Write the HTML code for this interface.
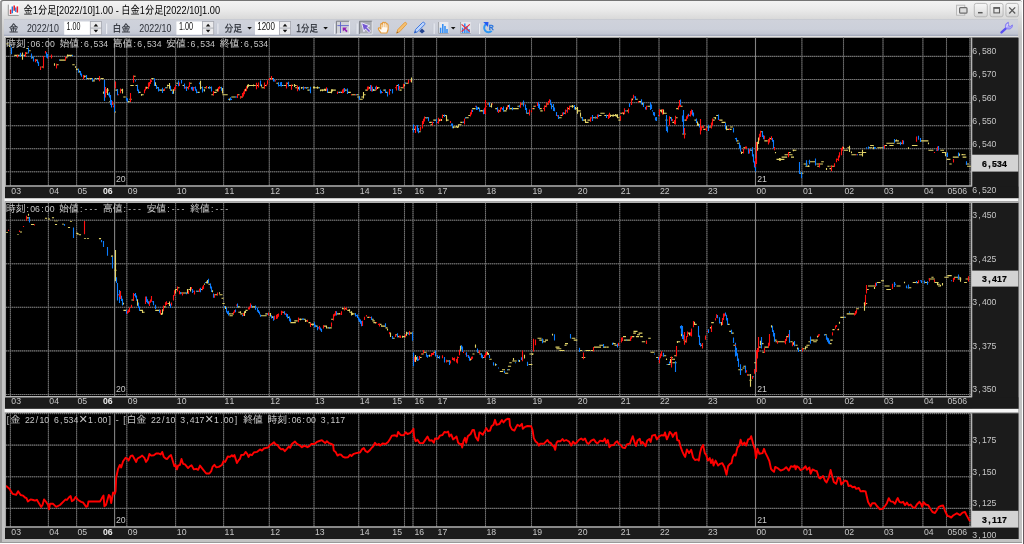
<!DOCTYPE html>
<html lang="ja"><head><meta charset="utf-8"><title>金1分足[2022/10]1.00 - 白金1分足[2022/10]1.00</title>
<style>
html,body{margin:0;padding:0;background:#fff;}
body{width:1024px;height:544px;overflow:hidden;position:relative;font-family:"Liberation Sans","IPAPGothic","Noto Sans CJK JP",sans-serif;}
#win{position:absolute;left:0;top:0;width:1021.8px;height:542.5px;background:#9a9a9a;border-top:1.2px solid #747474;box-sizing:border-box;border-radius:3px 3px 0 0;}
#frame{position:absolute;left:1.8px;top:1.2px;width:1020px;height:541.3px;background:linear-gradient(#ececec 0,#dadada 18px,#c5c5c5 36px,#c2c2c2 100%);border-radius:2px 2px 0 0;}
#redge{position:absolute;left:1022.9px;top:0;width:1.1px;height:544px;background:#64595e;}
#title{position:absolute;left:1.8px;top:1.2px;width:1020px;height:18.1px;background:linear-gradient(#f3f3f3,#ebebeb 45%,#d9d9d9);border-radius:2px 2px 0 0;}
#tool{position:absolute;left:4.3px;top:19.3px;width:1014.2px;height:17px;background:linear-gradient(#c2c4ca,#cfd2db 6%,#ccd0da 60%,#c2c6d2 88%,#a8aebf 97%);}
svg{position:absolute;left:0;top:0;will-change:transform;}
.t{fill:#c6c6c6;}
.k{font-family:"Liberation Sans","IPAGothic",monospace;font-size:10.2px;}
.l{font-family:"Liberation Sans","IPAGothic",sans-serif;font-size:9.9px;}
.kx{font-family:"Liberation Sans","IPAGothic",sans-serif;font-size:14.5px;}
.b6{font-weight:bold;fill:#ececec;}
.bx{font-weight:bold;fill:#000;stroke:#000;stroke-width:.25px;}
.bx.l{font-size:9.9px;}
.ui{font-family:"Liberation Sans","IPAPGothic","Noto Sans CJK JP",sans-serif;}
</style></head><body>
<div id="win"></div><div id="frame"></div><div id="redge"></div><div id="title"></div><div id="tool"></div>
<svg width="1024" height="544" viewBox="0 0 1024 544">
<rect x="4.4" y="36.3" width="1014" height="1.5" fill="#ededed"/>
<rect x="5" y="37.7" width="1013.3" height="501.3" fill="#000"/>
<rect x="972.1" y="37.7" width="46.2" height="160.5" fill="#1b1b1b"/>
<rect x="5" y="186.6" width="1013.3" height="11.6" fill="#1b1b1b"/>
<rect x="972.1" y="202.9" width="46.2" height="205.9" fill="#1b1b1b"/>
<rect x="5" y="397.3" width="1013.3" height="11.5" fill="#1b1b1b"/>
<rect x="972.1" y="413.2" width="46.2" height="125.8" fill="#1b1b1b"/>
<rect x="5" y="527.6" width="1013.3" height="11.4" fill="#1b1b1b"/>
<rect x="4.5" y="198.2" width="1014" height="3.3" fill="#f6f6f6"/><rect x="4.5" y="201.4" width="1014" height="1.5" fill="#c4c4c4"/>
<rect x="4.5" y="408.8" width="1014" height="3.4" fill="#f6f6f6"/><rect x="4.5" y="412.1" width="1014" height="1.2" fill="#c4c4c4"/>
<path d="M10.4 37.7V186.0M48.4 37.7V186.0M76.6 37.7V186.0M126.8 37.7V186.0M175.6 37.7V186.0M223.6 37.7V186.0M269.3 37.7V186.0M314.0 37.7V186.0M358.7 37.7V186.0M404.5 37.7V186.0M413.0 37.7V186.0M436.6 37.7V186.0M485.5 37.7V186.0M531.5 37.7V186.0M576.7 37.7V186.0M619.7 37.7V186.0M659.0 37.7V186.0M706.9 37.7V186.0M801.9 37.7V186.0M843.5 37.7V186.0M883.0 37.7V186.0M922.9 37.7V186.0M946.5 37.7V186.0M969.8 37.7V186.0M6.0 56.4H971.5M6.0 79.5H971.5M6.0 102.6H971.5M6.0 125.7H971.5M6.0 148.7H971.5M6.0 171.8H971.5" stroke="#424242" stroke-width="1.1" fill="none"/>
<path d="M10.4 37.7V186.0M48.4 37.7V186.0M76.6 37.7V186.0M126.8 37.7V186.0M175.6 37.7V186.0M223.6 37.7V186.0M269.3 37.7V186.0M314.0 37.7V186.0M358.7 37.7V186.0M404.5 37.7V186.0M413.0 37.7V186.0M436.6 37.7V186.0M485.5 37.7V186.0M531.5 37.7V186.0M576.7 37.7V186.0M619.7 37.7V186.0M659.0 37.7V186.0M706.9 37.7V186.0M801.9 37.7V186.0M843.5 37.7V186.0M883.0 37.7V186.0M922.9 37.7V186.0M946.5 37.7V186.0M969.8 37.7V186.0M6.0 56.4H971.5M6.0 79.5H971.5M6.0 102.6H971.5M6.0 125.7H971.5M6.0 148.7H971.5M6.0 171.8H971.5" stroke="#767676" stroke-width="1" stroke-dasharray="1 1" fill="none"/>
<path d="M114.6 37.7V186.0M755.5 37.7V186.0" stroke="#828282" stroke-width="1.1" fill="none"/>
<path d="M10.4 202.9V396.7M48.4 202.9V396.7M76.6 202.9V396.7M126.8 202.9V396.7M175.6 202.9V396.7M223.6 202.9V396.7M269.3 202.9V396.7M314.0 202.9V396.7M358.7 202.9V396.7M404.5 202.9V396.7M413.0 202.9V396.7M436.6 202.9V396.7M485.5 202.9V396.7M531.5 202.9V396.7M576.7 202.9V396.7M619.7 202.9V396.7M659.0 202.9V396.7M706.9 202.9V396.7M801.9 202.9V396.7M843.5 202.9V396.7M883.0 202.9V396.7M922.9 202.9V396.7M946.5 202.9V396.7M969.8 202.9V396.7M6.0 220.2H971.5M6.0 263.8H971.5M6.0 307.3H971.5M6.0 350.9H971.5M6.0 394.5H971.5" stroke="#424242" stroke-width="1.1" fill="none"/>
<path d="M10.4 202.9V396.7M48.4 202.9V396.7M76.6 202.9V396.7M126.8 202.9V396.7M175.6 202.9V396.7M223.6 202.9V396.7M269.3 202.9V396.7M314.0 202.9V396.7M358.7 202.9V396.7M404.5 202.9V396.7M413.0 202.9V396.7M436.6 202.9V396.7M485.5 202.9V396.7M531.5 202.9V396.7M576.7 202.9V396.7M619.7 202.9V396.7M659.0 202.9V396.7M706.9 202.9V396.7M801.9 202.9V396.7M843.5 202.9V396.7M883.0 202.9V396.7M922.9 202.9V396.7M946.5 202.9V396.7M969.8 202.9V396.7M6.0 220.2H971.5M6.0 263.8H971.5M6.0 307.3H971.5M6.0 350.9H971.5M6.0 394.5H971.5" stroke="#767676" stroke-width="1" stroke-dasharray="1 1" fill="none"/>
<path d="M114.6 202.9V396.7M755.5 202.9V396.7" stroke="#828282" stroke-width="1.1" fill="none"/>
<path d="M10.4 413.2V527.0M48.4 413.2V527.0M76.6 413.2V527.0M126.8 413.2V527.0M175.6 413.2V527.0M223.6 413.2V527.0M269.3 413.2V527.0M314.0 413.2V527.0M358.7 413.2V527.0M404.5 413.2V527.0M413.0 413.2V527.0M436.6 413.2V527.0M485.5 413.2V527.0M531.5 413.2V527.0M576.7 413.2V527.0M619.7 413.2V527.0M659.0 413.2V527.0M706.9 413.2V527.0M801.9 413.2V527.0M843.5 413.2V527.0M883.0 413.2V527.0M922.9 413.2V527.0M946.5 413.2V527.0M969.8 413.2V527.0M6.0 445.1H971.5M6.0 476.8H971.5M6.0 508.4H971.5" stroke="#424242" stroke-width="1.1" fill="none"/>
<path d="M10.4 413.2V527.0M48.4 413.2V527.0M76.6 413.2V527.0M126.8 413.2V527.0M175.6 413.2V527.0M223.6 413.2V527.0M269.3 413.2V527.0M314.0 413.2V527.0M358.7 413.2V527.0M404.5 413.2V527.0M413.0 413.2V527.0M436.6 413.2V527.0M485.5 413.2V527.0M531.5 413.2V527.0M576.7 413.2V527.0M619.7 413.2V527.0M659.0 413.2V527.0M706.9 413.2V527.0M801.9 413.2V527.0M843.5 413.2V527.0M883.0 413.2V527.0M922.9 413.2V527.0M946.5 413.2V527.0M969.8 413.2V527.0M6.0 445.1H971.5M6.0 476.8H971.5M6.0 508.4H971.5" stroke="#767676" stroke-width="1" stroke-dasharray="1 1" fill="none"/>
<path d="M6.0 413.7H971.5" stroke="#8a8a8a" stroke-width="1" stroke-dasharray="1 1"/>
<path d="M114.6 413.2V527.0M755.5 413.2V527.0" stroke="#828282" stroke-width="1.1" fill="none"/>
<path d="M6.4 43.9H8.6M9.5 45.5V47.0M14.3 55.4H16.7M15.5 55.4H17.5M17.3 55.4H19.7M20.4 55.4H22.6M22.5 52.6V59.7M23.3 55.4H25.7M25.5 53.1H27.5M26.4 48.5H28.6M28.3 50.8H30.7M31.3 57.8H33.7M35.4 60.1H37.6M41.5 67.0H43.5M54.5 63.2V65.8M56.4 64.7H58.6M59.4 60.1H61.6M60.3 60.1H62.7M61.2 60.1H63.8M63.3 60.1H65.7M65.5 57.8H67.5M67.5 54.5V56.8M67.2 55.4H69.8M68.4 55.4H70.6M70.3 55.4H72.7M72.3 64.7H74.7M75.5 66.2V67.8M76.5 68.5V69.9M76.3 69.3H78.7M79.5 70.7V72.5M84.5 75.6V77.5M84.4 76.2H86.6M86.2 78.5H88.8M89.3 78.5H91.7M90.2 78.5H92.8M92.2 80.9H94.8M94.5 78.5H96.5M96.2 78.5H98.8M97.4 78.5H99.6M100.5 78.5H102.5M101.3 78.5H103.7M103.5 91.6V93.8M103.5 92.4H105.5M104.4 92.4H106.6M106.3 90.1H108.7M109.4 101.6H111.6M111.5 100.9V104.5M111.4 104.0H113.6M115.4 90.1H117.6M120.4 90.1H122.6M122.5 88.7V93.5M123.3 97.0H125.7M127.3 101.6H129.7M129.3 99.3H131.7M130.3 85.5H132.7M131.3 85.5H133.7M133.4 76.2H135.6M135.5 85.5H137.5M138.4 92.4H140.6M141.5 94.0V95.8M141.3 94.7H143.7M146.5 86.7V88.7M146.3 87.8H148.7M151.3 78.5H153.7M155.5 82.2V85.9M156.4 87.8H158.6M159.4 90.1H161.6M160.3 90.1H162.7M162.3 90.1H164.7M165.3 87.8H167.7M167.5 84.7V86.6M167.4 85.5H169.6M169.5 82.9V88.7M170.5 90.1H172.5M173.5 89.2V93.8M176.3 83.2H178.7M182.5 85.5H184.5M186.2 87.8H188.8M189.3 83.2H191.7M197.4 92.4H199.6M200.5 80.8V89.2M200.3 87.8H202.7M204.5 89.2V91.4M204.2 87.8H206.8M208.5 87.0V88.5M209.3 87.8H211.7M211.4 94.7H213.6M213.4 92.4H215.6M214.4 92.4H216.6M215.4 90.1H217.6M217.5 88.8V91.4M219.3 87.8H221.7M222.5 88.0V93.4M222.4 94.7H224.6M223.3 94.7H225.7M224.3 94.7H226.7M225.3 94.7H227.7M229.5 98.6V100.5M231.3 97.0H233.7M232.3 97.0H234.7M233.5 97.0H235.5M237.5 94.7H239.5M240.3 97.0H242.7M245.5 88.7V91.3M247.5 84.8V88.4M248.5 84.2V86.8M248.4 85.5H250.6M249.3 85.5H251.7M250.4 85.5H252.6M251.3 85.5H253.7M253.5 84.4V86.3M253.2 85.5H255.8M256.4 85.5H258.6M261.5 84.4V86.7M261.5 87.8H263.5M262.5 87.8H264.5M264.4 85.5H266.6M269.2 78.5H271.8M271.4 78.5H273.6M276.4 83.2H278.6M281.2 85.5H283.8M283.5 85.5H285.5M284.3 85.5H286.7M286.4 83.2H288.6M288.5 85.5H290.5M289.3 85.5H291.7M292.5 84.8V86.1M294.5 84.0V86.9M294.4 85.5H296.6M295.3 87.8H297.7M298.5 86.9V89.2M301.5 86.9V88.7M301.3 87.8H303.7M304.3 87.8H306.7M306.4 87.8H308.6M307.4 90.1H309.6M313.5 86.4V88.5M314.5 86.5V88.4M315.2 87.8H317.8M317.5 86.4V88.7M317.3 87.8H319.7M320.5 89.4V91.2M320.4 90.1H322.6M322.5 89.2V91.3M323.5 89.5V90.8M324.5 88.8V90.7M325.5 88.8V90.9M327.4 92.4H329.6M328.4 92.4H330.6M329.5 92.4H331.5M331.5 89.3V93.3M332.5 89.3V91.5M332.2 90.1H334.8M333.2 90.1H335.8M338.3 92.4H340.7M340.2 92.4H342.8M344.3 90.1H346.7M347.3 92.4H349.7M348.2 92.4H350.8M351.4 94.7H353.6M353.3 94.7H355.7M356.4 94.7H358.6M357.2 97.0H359.8M359.5 99.3H361.5M360.3 99.3H362.7M361.3 97.0H363.7M363.5 92.0V98.5M363.4 94.7H365.6M365.3 90.1H367.7M369.5 86.9V88.8M373.5 89.0V91.0M373.3 90.1H375.7M377.5 87.1V89.1M377.5 87.8H379.5M383.4 90.1H385.6M385.4 92.4H387.6M396.3 85.5H398.7M399.4 90.1H401.6M400.5 87.8H402.5M401.2 87.8H403.8M404.5 84.3V86.2M405.5 83.2H407.5M406.5 83.2H408.5M411.5 77.5V82.5M412.3 129.4H414.7M413.5 129.4H415.5M418.3 131.7H420.7M424.4 117.8H426.6M426.4 117.8H428.6M429.2 122.4H431.8M430.5 124.7H432.5M433.3 120.1H435.7M434.4 120.1H436.6M439.5 119.3V121.2M441.5 118.9V120.9M442.4 115.5H444.6M444.3 115.5H446.7M446.5 115.5V121.3M446.4 120.1H448.6M453.5 126.2V128.2M453.2 127.0H455.8M454.2 127.0H456.8M456.5 125.8V127.6M457.5 126.2V128.0M458.5 124.3V127.6M458.3 124.7H460.7M459.5 124.7H461.5M460.3 122.4H462.7M465.2 117.8H467.8M466.3 117.8H468.7M468.3 115.5H470.7M472.2 108.6H474.8M473.5 108.6H475.5M478.5 107.2V109.1M479.5 110.9H481.5M481.5 110.0V111.5M481.4 110.9H483.6M487.3 104.0H489.7M489.4 106.3H491.6M491.5 103.3V107.6M495.3 108.6H497.7M498.4 110.9H500.6M503.4 110.9H505.6M504.4 110.9H506.6M506.5 107.2V110.0M508.5 105.0V107.0M509.3 108.6H511.7M510.5 108.6H512.5M512.2 108.6H514.8M513.2 108.6H515.8M514.5 108.6H516.5M515.4 108.6H517.6M516.3 108.6H518.7M517.4 106.3H519.6M520.2 104.0H522.8M521.4 104.0H523.6M526.3 113.2H528.7M532.5 108.6H534.5M533.4 106.3H535.6M539.3 108.6H541.7M540.3 110.9H542.7M544.4 106.3H546.6M546.4 104.0H548.6M551.2 106.3H553.8M558.3 117.8H560.7M559.4 117.8H561.6M560.4 115.5H562.6M563.3 113.2H565.7M567.2 108.6H569.8M569.5 106.3H571.5M570.5 106.3H572.5M572.5 105.1V107.7M572.2 106.3H574.8M575.5 107.1V109.7M575.3 108.6H577.7M577.5 107.0V113.8M577.5 110.9H579.5M578.3 110.9H580.7M580.5 112.5V116.7M580.5 117.8H582.5M582.3 120.1H584.7M583.4 120.1H585.6M585.5 118.9V123.1M585.2 122.4H587.8M586.4 122.4H588.6M587.5 120.1H589.5M588.2 120.1H590.8M592.4 117.8H594.6M593.4 117.8H595.6M595.2 117.8H597.8M598.3 115.5H600.7M599.5 115.5H601.5M600.3 113.2H602.7M601.2 113.2H603.8M602.3 113.2H604.7M604.3 115.5H606.7M606.3 115.5H608.7M610.5 114.6V116.9M610.5 115.5H612.5M612.5 114.8V116.4M613.5 114.4V116.4M613.3 115.5H615.7M615.5 114.1V116.2M616.5 114.5V116.7M617.5 114.3V118.2M617.4 117.8H619.6M618.4 120.1H620.6M620.3 113.2H622.7M623.5 112.5V114.5M626.4 110.9H628.6M632.5 98.4V100.3M635.3 99.3H637.7M638.4 101.6H640.6M639.3 101.6H641.7M642.5 103.1V104.7M647.4 106.3H649.6M648.4 106.3H650.6M660.5 109.7V111.6M661.5 109.4V112.4M663.5 109.4V114.2M663.3 113.2H665.7M664.3 113.2H666.7M665.5 120.1H667.5M670.5 116.9V118.6M672.4 122.4H674.6M675.4 117.8H677.6M676.2 108.6H678.8M680.4 106.3H682.6M682.3 134.0H684.7M683.3 134.0H685.7M684.4 120.1H686.6M694.5 120.1H696.5M697.5 121.6V125.7M698.5 123.5V125.9M701.4 127.0H703.6M703.3 129.4H705.7M706.2 127.0H708.8M708.3 127.0H710.7M709.2 127.0H711.8M712.3 120.1H714.7M713.5 117.8H715.5M715.5 116.9V119.2M716.2 115.5H718.8M719.4 120.1H721.6M720.5 120.1H722.5M721.5 122.4H723.5M722.4 122.4H724.6M723.5 122.4H725.5M726.5 125.9V130.3M727.5 128.8V130.0M727.5 129.4H729.5M729.4 129.4H731.6M730.2 127.0H732.8M736.5 140.9H738.5M737.2 143.2H739.8M741.5 151.4V153.9M741.5 152.5H743.5M743.3 147.8H745.7M750.5 150.2H752.5M757.5 141.7V150.8M758.5 137.5V143.9M760.4 131.7H762.6M764.3 140.9H766.7M765.3 140.9H767.7M769.4 138.6H771.6M775.5 151.9V153.3M776.5 159.4H780.5M779.5 158.0V160.7M780.5 158.3V160.8M780.2 159.4H782.8M780.6 159.4H784.4M781.6 157.1H785.4M782.9 157.1H786.1M783.9 157.1H787.1M784.5 154.8H788.5M788.3 152.5H790.7M788.5 154.8H792.5M791.0 157.1H794.0M793.5 149.4V151.2M792.6 150.2H796.4M799.6 173.2H803.4M803.6 164.0H807.4M805.4 166.3H809.6M808.5 165.3V167.0M808.7 161.7H812.3M811.2 161.7H813.8M811.3 161.7H815.7M816.3 164.0H818.7M817.2 166.3H819.8M818.4 164.0H822.6M820.1 164.0H822.9M821.2 161.7H823.8M826.5 167.9V170.0M827.4 166.3H829.6M829.5 168.6H831.5M830.4 166.3H834.6M843.5 147.1V149.1M844.0 150.2H847.0M845.0 150.2H848.0M847.4 147.8H849.6M849.5 145.8V152.1M851.5 151.5V153.2M851.4 154.8H855.6M853.1 154.8H855.9M858.2 152.5H860.8M859.0 154.8H862.0M862.5 149.7V156.5M861.3 152.5H865.7M862.8 152.5H866.2M868.6 147.8H872.4M870.1 145.5H872.9M871.2 145.5H873.8M873.5 146.7V149.3M877.3 147.8H879.7M877.5 147.8H881.5M878.4 147.8H882.6M880.7 147.8H884.3M884.0 145.5H887.0M886.3 143.2H888.7M887.2 143.2H889.8M888.1 143.2H890.9M889.4 145.5H893.6M890.6 143.2H894.4M894.1 140.9H896.9M896.5 139.5V141.6M896.1 140.9H898.9M896.7 143.2H900.3M900.4 143.2H902.6M908.5 147.2V149.1M911.9 145.5H915.1M913.5 145.5H917.5M920.8 140.9H924.2M921.8 140.9H925.2M923.7 140.9H927.3M924.6 140.9H928.4M928.5 142.5V144.2M928.4 150.2H932.6M929.6 150.2H933.4M940.3 150.2H942.7M941.0 150.2H944.0M941.9 152.5H945.1M945.5 151.9V156.2M946.6 159.4H950.4M949.3 164.0H951.7M952.8 157.1H956.2M953.7 157.1H957.3M954.3 157.1H958.7M959.5 153.4V155.7M962.5 154.0V155.3M961.4 154.8H965.6M962.6 157.1H966.4M965.9 164.0H969.1M967.1 166.3H969.9M968.0 166.3H971.0M107.5 88.1V95.0M115.5 111.5V112.5" stroke="#e2d468" stroke-width="1.1" fill="none"/>
<path d="M10.5 45.7V46.8M11.5 47.6V54.2M19.5 54.9V56.0M20.5 52.8V56.8M23.5 54.9V56.0M28.5 47.8V53.6M31.5 53.6V58.8M33.5 56.4V61.4M37.5 59.7V63.3M38.5 61.7V65.9M46.5 52.2V57.5M47.5 54.1V58.5M59.5 59.5V60.6M72.5 54.9V56.0M78.5 68.8V72.7M80.5 71.1V75.2M81.5 73.5V76.7M86.5 75.1V79.0M92.5 78.1V81.5M96.5 78.0V79.1M108.5 93.6V95.5M109.5 92.3V97.5M114.5 104.5V112.1M117.5 89.1V95.3M126.5 97.6V100.8M127.5 98.3V102.2M135.5 80.3V81.4M137.5 84.7V90.9M138.5 89.5V93.2M154.5 78.3V85.9M156.5 84.9V88.9M158.5 87.0V91.6M159.5 89.5V90.6M162.5 87.7V93.0M165.5 87.2V88.3M170.5 85.8V90.7M172.5 91.2V94.0M176.5 84.9V86.0M178.5 80.4V86.2M181.5 80.0V83.6M184.5 83.5V88.7M186.5 86.5V91.1M191.5 87.1V89.4M192.5 86.7V90.8M194.5 87.2V88.3M195.5 86.6V90.8M196.5 89.3V93.2M197.5 91.9V93.0M199.5 82.6V84.3M202.5 86.6V92.4M203.5 89.5V90.6M209.5 86.2V88.7M211.5 86.6V91.4M221.5 86.7V90.8M228.5 98.8V99.9M230.5 97.3V100.3M231.5 98.8V99.9M235.5 96.5V97.6M236.5 96.5V97.6M260.5 80.6V85.9M273.5 77.9V81.4M274.5 80.3V81.4M278.5 82.3V86.4M279.5 84.9V86.0M280.5 82.3V86.2M281.5 82.1V86.5M283.5 84.9V86.0M288.5 81.7V86.4M299.5 86.6V90.4M303.5 86.6V89.8M306.5 86.9V88.8M309.5 89.5V90.6M310.5 86.7V93.2M319.5 87.2V88.3M327.5 88.6V92.8M338.5 91.9V93.0M340.5 91.9V93.0M344.5 88.0V92.0M347.5 88.5V94.0M356.5 94.2V95.3M359.5 96.3V99.7M370.5 85.1V91.1M372.5 86.8V91.5M375.5 86.7V89.4M380.5 89.4V93.5M381.5 91.0V93.3M385.5 89.6V93.1M387.5 92.0V96.5M390.5 89.2V90.9M392.5 89.0V93.4M398.5 83.9V90.6M405.5 82.6V83.7M415.5 127.1V130.1M417.5 126.2V130.8M418.5 128.0V133.2M426.5 117.3V118.4M428.5 117.2V121.2M433.5 121.9V123.0M436.5 119.1V123.3M444.5 114.5V117.0M451.5 123.5V125.7M452.5 123.5V128.2M463.5 121.6V123.0M465.5 117.3V118.4M472.5 109.7V112.0M476.5 105.7V109.9M477.5 107.3V109.7M479.5 107.7V111.6M483.5 109.6V114.2M489.5 102.6V106.8M497.5 107.3V111.8M502.5 108.0V109.7M503.5 106.5V111.4M509.5 104.4V109.2M512.5 107.3V110.3M519.5 105.3V107.3M523.5 100.6V106.4M525.5 104.4V110.0M526.5 107.9V113.2M528.5 112.6V113.7M538.5 101.8V107.9M539.5 104.0V109.2M550.5 99.7V104.9M551.5 103.4V109.3M553.5 103.9V110.9M554.5 107.4V111.3M556.5 112.1V115.9M558.5 115.0V119.1M563.5 112.3V114.6M566.5 110.3V111.4M574.5 105.1V109.4M582.5 117.0V120.8M592.5 115.0V121.0M595.5 116.6V118.6M598.5 114.5V117.0M606.5 114.8V118.1M625.5 110.3V111.4M629.5 103.2V107.0M634.5 96.5V97.6M635.5 96.2V100.1M641.5 99.2V104.5M643.5 102.6V107.1M645.5 106.9V109.5M650.5 102.3V110.1M651.5 104.5V109.1M652.5 110.3V111.4M653.5 111.9V115.2M654.5 112.2V116.3M655.5 117.2V120.6M656.5 117.0V121.0M658.5 115.0V116.0M667.5 126.4V132.4M671.5 117.2V121.0M682.5 115.4V121.7M688.5 113.8V116.4M692.5 110.1V115.4M693.5 112.4V116.6M696.5 118.4V123.1M699.5 123.9V127.5M700.5 125.8V130.7M708.5 124.8V131.0M718.5 114.6V119.9M725.5 122.9V129.2M733.5 127.7V132.6M735.5 138.0V139.2M736.5 137.7V141.5M739.5 142.8V148.8M740.5 145.3V151.7M748.5 148.8V153.8M750.5 149.1V151.1M752.5 147.2V156.4M753.5 154.2V162.6M754.5 161.2V167.4M762.5 131.0V136.9M763.5 135.3V139.2M772.5 138.1V141.8M773.5 139.9V148.4M806.5 160.2V166.3M809.5 159.7V164.2M815.5 158.6V165.4M857.5 154.2V155.3M866.5 147.3V148.4M868.5 146.6V149.1M874.5 147.1V148.9M875.5 147.3V148.4M883.5 146.6V148.6M894.5 138.9V142.7M900.5 141.8V145.3M903.5 140.4V144.3M918.5 135.7V139.7M920.5 137.9V142.0M936.5 149.6V150.7M938.5 146.1V150.5M946.5 154.2V155.3M947.5 152.4V157.1M958.5 152.6V156.5M966.5 161.2V164.7M413.5 124.5V132.5M417.5 125.0V131.5M104.5 80.0V101.0M110.5 95.0V105.0M111.5 100.0V107.5M114.5 105.0V108.1M666.5 115.0V131.0M680.5 99.5V105.0M683.5 110.0V134.0M755.5 160.0V171.5M799.5 162.0V174.0M801.5 172.0V178.0" stroke="#0a7cff" stroke-width="1.1" fill="none"/>
<path d="M17.5 54.8V57.5M25.5 52.1V57.1M35.5 58.9V62.2M40.5 66.5V69.9M43.5 59.5V68.3M48.5 57.2V58.3M51.5 54.4V58.6M56.5 63.8V68.5M65.5 56.4V60.5M83.5 75.1V79.3M99.5 75.9V81.3M106.5 89.3V92.9M113.5 105.5V107.3M118.5 94.2V95.3M120.5 88.5V93.2M133.5 75.4V82.7M144.5 89.4V93.3M145.5 86.8V90.6M148.5 82.4V89.1M149.5 82.0V86.6M150.5 79.0V84.0M151.5 80.2V82.1M164.5 88.6V90.9M174.5 87.2V90.7M175.5 84.9V88.9M179.5 82.4V86.1M185.5 86.7V88.4M188.5 86.3V89.5M189.5 82.2V87.0M193.5 87.0V91.1M206.5 86.0V88.5M213.5 91.1V95.4M218.5 87.1V91.5M219.5 86.2V88.7M237.5 93.9V97.9M240.5 96.3V98.8M242.5 92.9V97.6M243.5 91.4V96.6M244.5 89.3V94.3M246.5 86.2V91.2M256.5 82.7V89.2M258.5 82.6V87.6M264.5 82.4V88.8M266.5 84.4V86.3M267.5 80.3V84.4M269.5 77.9V80.0M271.5 76.1V79.9M275.5 80.3V81.4M286.5 82.6V88.5M291.5 84.5V89.8M297.5 85.6V91.2M304.5 87.2V88.3M326.5 87.3V90.8M337.5 91.6V94.0M342.5 89.5V93.3M343.5 88.5V92.9M351.5 94.2V95.3M355.5 94.2V95.3M367.5 86.6V90.5M368.5 86.5V89.4M371.5 85.3V91.6M376.5 85.7V90.2M382.5 91.9V93.0M389.5 89.1V94.7M395.5 87.2V88.3M396.5 85.0V90.6M399.5 86.0V89.2M403.5 83.7V88.3M408.5 79.8V83.6M410.5 80.3V81.4M420.5 126.7V130.8M422.5 121.1V128.6M423.5 118.8V123.9M424.5 116.4V121.4M432.5 121.7V125.5M437.5 121.9V123.0M438.5 117.8V123.8M440.5 118.7V121.1M442.5 114.4V118.3M450.5 120.9V123.1M464.5 118.6V124.5M470.5 112.3V116.4M471.5 109.8V114.4M475.5 105.7V106.8M484.5 107.8V114.0M485.5 105.3V109.6M486.5 105.7V106.8M487.5 103.4V104.5M492.5 103.4V104.5M498.5 109.4V112.9M500.5 107.5V111.7M501.5 107.1V109.3M507.5 105.2V109.2M520.5 102.3V107.8M524.5 103.4V104.5M529.5 109.5V115.4M531.5 110.2V112.2M532.5 108.0V109.1M535.5 105.7V106.8M537.5 102.2V105.9M543.5 108.0V109.1M544.5 105.6V111.2M546.5 102.6V107.2M548.5 101.1V104.7M549.5 99.3V102.7M557.5 114.9V116.6M562.5 112.5V116.0M565.5 109.4V114.2M567.5 106.9V112.7M569.5 105.8V110.0M590.5 117.2V121.7M591.5 117.3V118.4M597.5 114.6V118.8M608.5 114.6V119.0M609.5 112.7V117.9M620.5 115.7V120.6M622.5 112.0V113.8M624.5 108.2V114.2M628.5 108.5V113.3M631.5 98.4V104.9M633.5 94.7V98.4M638.5 100.9V102.8M646.5 105.8V109.8M659.5 109.3V116.3M662.5 109.1V114.6M669.5 116.2V125.6M672.5 119.0V120.9M674.5 119.9V124.3M675.5 115.7V124.6M678.5 105.7V109.6M679.5 100.1V106.7M680.5 104.8V107.0M686.5 116.3V120.7M687.5 114.7V118.8M689.5 115.0V116.0M690.5 111.1V116.4M691.5 109.4V114.5M701.5 126.6V130.4M703.5 125.6V128.2M705.5 128.8V129.9M706.5 127.7V131.1M711.5 122.4V128.5M712.5 118.6V125.5M719.5 119.6V120.7M729.5 128.8V129.9M743.5 148.7V153.6M745.5 146.4V148.6M746.5 146.5V148.7M749.5 149.1V153.5M755.5 158.6V166.9M756.5 149.1V160.7M759.5 133.7V140.5M760.5 130.8V137.0M764.5 135.8V139.6M768.5 139.1V144.5M769.5 137.6V142.5M771.5 136.3V139.9M774.5 147.1V150.3M788.5 151.9V157.3M819.5 163.2V167.5M831.5 165.6V171.3M834.5 163.3V166.9M836.5 158.5V162.2M837.5 158.8V159.9M838.5 155.6V160.9M839.5 152.2V157.5M841.5 148.1V155.3M842.5 146.5V150.7M856.5 154.2V155.3M884.5 145.1V148.6M902.5 139.9V144.3M916.5 136.5V141.8M934.5 151.9V153.0M937.5 146.5V150.9M953.5 158.9V162.5M415.5 126.0V133.0M105.5 87.0V97.5M105.5 87.5V96.2M112.5 101.2V105.0M115.5 81.5V88.5M43.5 56.0V60.5M45.5 51.0V53.5M130.5 93.0V102.0M485.5 100.0V114.0M684.5 128.0V138.5M700.5 119.0V134.5M756.5 142.0V164.0" stroke="#ff1010" stroke-width="1.1" fill="none"/>
<path d="M114.4 270.3H116.6M123.5 302.7V304.6M123.4 310.4H125.6M124.4 310.4H126.6M131.4 300.0H133.6M137.5 299.3V305.7M139.4 310.4H141.6M140.4 310.4H142.6M142.5 309.7V312.9M142.4 312.2H144.6M155.2 310.4H157.8M156.3 310.4H158.7M157.3 310.4H159.7M161.5 313.1V314.9M162.5 309.3V314.5M163.2 306.9H165.8M167.3 303.5H169.7M169.5 301.4V306.0M175.5 288.9V293.5M175.4 289.5H177.6M177.5 287.8H179.5M180.2 293.0H182.8M182.5 293.0H184.5M183.4 293.0H185.6M184.4 293.0H186.6M187.5 289.1V293.6M188.5 289.5H190.5M190.5 287.1V291.6M196.3 291.2H198.7M200.3 289.5H202.7M204.5 283.4V284.8M206.5 281.5V283.3M207.5 279.9V283.4M208.4 284.3H210.6M212.5 290.3V292.2M214.3 294.7H216.7M215.3 294.7H217.7M219.5 292.2V293.8M219.4 294.7H221.6M220.5 294.7H222.5M221.5 298.2H223.5M222.4 303.5H224.6M225.5 306.2V309.1M228.2 313.9H230.8M229.5 315.7H231.5M230.2 315.7H232.8M231.3 313.9H233.7M237.2 306.9H239.8M238.3 312.2H240.7M240.5 311.3V313.1M240.3 313.9H242.7M244.5 311.2V316.0M245.5 311.0V313.0M245.4 310.4H247.6M251.3 306.9H253.7M252.3 306.9H254.7M253.2 306.9H255.8M260.3 315.7H262.7M261.5 315.7H263.5M262.3 315.7H264.7M263.3 315.7H265.7M264.3 315.7H266.7M265.3 313.9H267.7M270.5 313.1V316.5M272.5 316.3V318.0M282.2 312.2H284.8M287.3 317.4H289.7M290.4 322.6H292.6M291.2 322.6H293.8M292.4 322.6H294.6M293.2 322.6H295.8M294.3 320.9H296.7M295.3 320.9H297.7M298.4 319.2H300.6M300.5 318.6V320.2M300.3 319.2H302.7M303.5 319.2H305.5M305.5 319.8V322.0M305.3 320.9H307.7M308.5 322.6H310.5M310.3 324.4H312.7M312.5 323.5V325.5M312.4 324.4H314.6M315.4 326.1H317.6M323.4 326.1H325.6M324.5 326.1H326.5M326.5 325.6V328.6M327.4 327.9H329.6M329.3 327.9H331.7M331.2 319.2H333.8M336.4 313.9H338.6M337.4 313.9H339.6M339.5 313.1V314.5M342.5 308.0V309.3M342.3 308.7H344.7M344.3 308.7H346.7M347.3 310.4H349.7M349.5 309.3V311.6M349.4 312.2H351.6M351.5 311.2V315.5M352.5 312.8V315.1M352.4 313.9H354.6M367.3 317.4H369.7M371.3 319.2H373.7M372.3 320.9H374.7M373.4 322.6H375.6M375.5 322.0V323.5M379.5 324.4H381.5M381.5 325.2V326.8M381.4 326.1H383.6M383.2 326.1H385.8M385.5 327.9H387.5M387.5 328.7V330.5M390.5 332.6V337.1M392.3 338.3H394.7M395.3 334.8H397.7M397.4 336.6H399.6M402.5 335.8V337.8M402.4 336.6H404.6M403.2 336.6H405.8M406.5 331.7V335.7M406.4 333.1H408.6M409.4 333.1H411.6M410.3 333.1H412.7M415.5 356.3V358.7M416.5 357.1V359.8M419.4 357.5H421.6M421.4 354.0H423.6M423.3 352.3H425.7M424.4 352.3H426.6M429.5 354.8V356.8M433.3 352.3H435.7M437.4 357.5H439.6M446.3 361.0H448.7M447.4 361.0H449.6M460.5 345.7V351.2M470.5 358.6V360.4M472.5 354.0H474.5M475.5 344.6V347.8M477.5 352.3H479.5M479.4 354.0H481.6M482.3 357.5H484.7M487.5 351.7V354.8M488.5 353.0V355.0M489.3 359.3H491.7M495.5 363.4V365.7M499.8 371.5H503.2M502.0 369.7H505.0M504.8 373.2H508.2M507.1 369.7H509.9M507.9 366.2H511.1M509.3 362.8H511.7M513.5 358.1V360.2M512.3 361.0H516.7M519.5 360.1V362.0M522.5 358.1V360.1M524.5 354.7V358.6M528.6 364.5H532.4M529.4 354.0H533.6M532.5 353.2V354.9M537.5 338.3H541.5M539.3 340.1H541.7M539.5 340.1H543.5M543.0 341.8H546.0M545.0 340.1H548.0M552.5 333.8V335.6M555.5 347.1H559.5M556.3 348.8H560.7M557.7 348.8H561.3M559.3 350.5H561.7M560.6 350.5H564.4M564.4 345.3H566.6M565.0 343.6H568.0M571.7 338.3H575.3M573.7 340.1H577.3M579.0 350.5H582.0M581.7 357.5H585.3M585.4 350.5H589.6M586.8 350.5H590.2M591.0 350.5H594.0M594.0 347.1H597.0M595.8 347.1H599.2M597.1 347.1H599.9M598.0 347.1H601.0M599.3 345.3H601.7M599.6 345.3H603.4M603.0 347.1H606.0M606.3 347.1H608.7M613.5 342.7V344.2M613.3 343.6H615.7M614.5 345.3H618.5M623.0 336.6H626.0M623.9 340.1H627.1M626.1 340.1H628.9M627.9 340.1H631.1M630.7 336.6H634.3M633.2 333.1H635.8M633.5 331.4H637.5M635.9 336.6H639.1M637.0 334.8H640.0M638.6 333.1H642.4M640.2 336.6H642.8M641.8 341.8H645.2M648.2 338.3H650.8M650.5 352.3H654.5M656.1 357.5H658.9M662.8 355.8H666.2M666.5 358.5V360.0M666.7 364.5H670.3M670.5 358.9V363.3M670.2 357.5H672.8M672.0 359.3H675.0M672.4 362.8H676.6M674.2 355.8H676.8M677.5 341.0V343.0M676.8 341.8H680.2M681.5 330.5V336.3M683.5 340.1H685.5M684.3 341.8H686.7M687.5 333.1H689.5M689.5 332.5V335.4M694.5 321.8V325.1M694.3 324.4H696.7M700.5 345.3H702.5M710.5 327.1V328.6M711.2 322.6H713.8M721.5 322.1V325.5M727.4 324.4H729.6M729.3 331.4H731.7M731.3 333.1H733.7M733.4 345.3H735.6M738.3 369.7H740.7M739.2 369.7H741.8M740.5 369.7H742.5M742.5 368.0H744.5M743.4 366.2H745.6M747.2 375.0H749.8M749.4 380.2H751.6M754.2 362.8H756.8M758.2 347.1H760.8M760.5 340.7V345.2M761.5 340.7V344.1M761.5 343.6H763.5M762.4 352.3H764.6M764.4 347.1H766.6M766.3 347.1H768.7M771.5 325.2V327.4M774.4 340.1H776.6M775.5 341.8H777.5M777.4 341.8H779.6M778.4 341.8H780.6M780.4 341.8H782.6M781.2 341.8H783.8M782.2 341.8H784.8M786.2 336.6H788.8M790.4 341.8H792.6M793.5 342.3V344.7M795.4 345.3H797.6M797.5 347.6V349.6M799.4 350.5H801.6M802.3 348.8H804.7M805.5 346.3V349.4M805.2 347.1H807.8M806.4 345.3H808.6M807.4 345.3H809.6M808.4 341.8H810.6M810.2 340.1H812.8M811.4 340.1H813.6M812.3 340.1H814.7M813.2 341.8H815.8M814.3 341.8H816.7M815.3 340.1H817.7M817.5 335.8V337.5M824.3 334.8H826.7M829.4 343.6H831.6M830.3 340.1H832.7M832.4 329.6H834.6M838.5 328.7V330.3M839.5 321.8V323.8M840.3 317.4H842.7M840.8 317.4H844.2M841.4 317.4H845.6M846.7 313.9H850.3M849.3 313.9H851.7M849.4 313.9H853.6M852.4 313.9H854.6M856.2 308.7H858.8M864.5 302.2V310.8M863.8 303.5H867.2M866.3 289.5H868.7M868.0 286.0H871.0M870.5 286.0H874.5M871.4 286.0H875.6M874.5 287.0V289.0M876.8 282.5H880.2M878.5 282.5H880.5M881.0 280.8H884.0M884.5 286.0H888.5M885.4 286.0H889.6M886.3 289.5H890.7M888.1 289.5H890.9M896.5 286.0H900.5M904.5 281.7V283.3M907.7 287.8H911.3M912.7 282.5H916.3M917.5 281.9V283.2M924.7 282.5H928.3M928.7 279.0H932.3M931.4 277.3H933.6M932.2 279.0H934.8M934.4 282.5H938.6M937.5 283.1V285.3M937.2 284.3H939.8M938.1 286.0H940.9M940.5 284.8V286.6M942.5 283.1V285.4M944.3 277.3H948.7M947.3 275.6H951.7M953.9 277.3H957.1M955.4 277.3H957.6M955.3 277.3H959.7M957.7 279.0H961.3M960.5 277.3V281.8M964.1 282.5H966.9M965.6 279.0H969.4M415.5 355.0V362.0M750.5 374.0V386.7M6.5 232.0V232.7M7.5 232.0V232.7M17.5 234.4V235.0M18.5 234.4V235.0M20.5 231.5V232.4M21.5 231.5V232.4M27.5 217.3V218.5M28.5 217.3V218.5M28.5 213.8V215.7M31.5 224.1V224.9M32.5 224.1V224.9M32.5 224.1V224.9M33.5 224.1V224.9M45.5 217.8V218.8M46.5 217.8V218.8M48.5 218.6V219.6M49.5 218.6V219.6M52.5 217.2V218.2M53.5 217.2V218.2M54.5 220.7V221.3M55.5 220.7V221.3M56.5 220.7V221.3M57.5 220.7V221.3M55.5 224.1V224.9M56.5 224.1V224.9M62.5 223.8V224.5M63.5 223.8V224.5M68.5 227.0V227.9M69.5 227.0V227.9M70.5 221.2V222.0M71.5 221.2V222.0M76.5 232.8V233.8M77.5 232.8V233.8M77.5 233.4V234.4M78.5 233.4V234.4M79.5 234.2V235.2M80.5 234.2V235.2M84.5 238.2V239.0M85.5 238.2V239.0M87.5 238.2V239.0M88.5 238.2V239.0M99.5 238.0V239.2M100.5 238.0V239.2M111.5 255.6V256.8M112.5 255.6V256.8M115.5 249.9V281.2" stroke="#e2d468" stroke-width="1.1" fill="none"/>
<path d="M117.5 291.8V293.9M118.5 294.2V295.3M120.5 293.5V297.3M121.5 295.8V300.9M122.5 298.7V305.6M126.5 309.7V314.0M134.5 293.9V295.8M135.5 293.1V297.4M136.5 295.6V300.7M138.5 302.6V307.9M139.5 306.4V310.7M146.5 296.6V301.9M147.5 299.2V303.3M148.5 301.3V304.3M152.5 301.2V302.3M153.5 301.0V305.3M155.5 304.7V309.1M159.5 309.5V312.7M170.5 303.8V307.9M180.5 292.0V294.3M186.5 292.4V294.2M192.5 288.9V292.9M193.5 290.7V291.8M196.5 290.7V291.8M198.5 290.7V291.8M200.5 287.7V292.3M205.5 282.0V283.1M208.5 278.7V283.2M210.5 283.4V288.6M211.5 286.4V292.0M213.5 293.6V297.7M224.5 306.1V308.0M226.5 307.6V312.6M227.5 311.2V314.0M228.5 310.8V315.5M235.5 309.6V312.3M237.5 303.4V307.6M242.5 315.1V316.2M251.5 304.8V307.8M255.5 305.4V309.7M257.5 307.8V311.7M258.5 310.0V313.0M259.5 311.5V314.6M260.5 314.5V316.8M267.5 313.4V314.8M271.5 315.2V318.6M273.5 316.2V320.8M284.5 311.3V314.4M286.5 313.4V316.7M287.5 314.1V318.4M289.5 316.6V321.2M290.5 318.6V322.0M302.5 318.6V319.7M303.5 318.6V319.7M314.5 322.2V327.3M315.5 324.8V327.3M317.5 326.5V330.2M318.5 327.3V328.4M320.5 327.4V330.4M321.5 328.8V331.9M329.5 327.3V328.4M336.5 311.3V315.5M355.5 312.9V316.4M356.5 315.1V316.2M357.5 314.5V318.1M358.5 316.9V320.5M359.5 318.6V321.9M360.5 319.5V323.8M361.5 321.0V326.2M371.5 316.5V320.0M385.5 323.3V327.0M392.5 336.1V338.9M397.5 333.2V337.2M408.5 332.4V334.8M412.5 332.3V340.7M417.5 356.3V361.1M418.5 358.7V360.6M426.5 353.3V356.7M427.5 355.0V357.8M428.5 355.2V356.3M435.5 350.6V356.5M437.5 355.1V358.3M439.5 355.8V358.8M444.5 357.1V362.4M449.5 359.9V365.1M461.5 345.3V349.5M462.5 346.5V352.0M466.5 352.3V356.8M468.5 355.0V358.0M469.5 356.6V360.8M477.5 348.4V352.5M481.5 353.2V357.7M482.5 354.7V358.4M489.5 355.0V358.0M493.5 362.2V365.4M496.5 363.9V365.2M498.5 367.4V368.5M504.5 370.8V373.0M507.5 369.2V370.3M515.5 362.2V363.3M518.5 359.8V361.7M521.5 357.2V359.9M527.5 361.8V366.1M542.5 338.6V343.3M554.5 334.2V340.6M570.5 333.9V338.6M579.5 347.7V352.1M603.5 344.0V347.5M612.5 342.7V345.0M617.5 343.8V347.5M626.5 339.5V340.6M654.5 353.5V354.6M658.5 356.9V359.9M663.5 352.7V356.6M667.5 363.9V365.0M669.5 361.4V363.7M680.5 325.9V328.5M682.5 334.1V337.2M683.5 334.8V339.4M698.5 326.1V337.1M699.5 335.4V345.0M700.5 342.9V346.5M708.5 329.3V333.1M717.5 315.0V318.2M719.5 317.2V323.5M720.5 322.1V323.2M725.5 312.6V315.8M726.5 314.8V320.6M727.5 318.0V324.9M731.5 329.7V333.7M733.5 337.4V342.9M736.5 347.7V355.8M737.5 353.3V360.9M738.5 358.4V366.9M745.5 365.8V372.7M753.5 376.2V377.3M772.5 325.7V332.0M773.5 330.3V336.4M794.5 341.1V346.3M798.5 347.7V352.0M801.5 350.0V351.1M824.5 334.3V335.4M826.5 335.2V339.7M827.5 337.5V341.7M828.5 338.2V343.4M829.5 340.5V344.0M844.5 316.9V318.0M849.5 311.6V312.7M876.5 282.8V285.8M894.5 281.9V287.1M895.5 283.7V284.8M906.5 285.4V288.3M908.5 284.6V288.4M916.5 281.1V283.2M920.5 280.2V281.3M921.5 280.3V283.0M924.5 280.6V283.5M927.5 281.3V284.7M951.5 280.2V281.3M958.5 274.6V279.1M413.5 352.5V366.2M117.5 283.0V300.5M119.5 290.0V303.0M675.5 361.3V372.0M681.5 325.2V334.0M682.5 326.0V339.0M735.5 342.7V356.5M740.5 364.2V375.0M761.5 337.0V348.6M774.5 333.0V341.8M789.5 330.0V342.7M810.5 336.5V343.7M29.5 216.9V222.4M64.5 224.1V225.7M73.5 227.4V238.1M101.5 240.0V242.3M103.5 241.1V247.0M107.5 246.9V255.7M112.5 256.8V268.5M116.5 277.3V283.1" stroke="#0a7cff" stroke-width="1.1" fill="none"/>
<path d="M119.5 293.8V297.1M127.5 310.7V313.8M128.5 309.5V312.8M129.5 307.5V312.0M131.5 304.8V307.8M133.5 293.1V301.0M145.5 296.5V304.1M149.5 301.2V305.9M150.5 299.5V302.7M151.5 296.0V301.7M160.5 309.8V314.6M163.5 305.5V311.3M165.5 302.3V305.7M166.5 301.2V305.1M167.5 302.9V304.0M171.5 302.6V305.6M173.5 294.9V300.6M174.5 290.2V295.8M177.5 286.5V291.6M179.5 290.7V294.2M182.5 292.5V295.6M188.5 290.6V294.0M191.5 287.0V289.8M194.5 290.5V294.4M199.5 288.8V291.9M202.5 286.6V290.2M203.5 284.9V288.9M214.5 294.3V297.7M217.5 292.5V295.4M233.5 311.8V314.4M234.5 309.9V312.7M236.5 304.6V305.8M243.5 313.0V316.1M248.5 307.5V309.4M249.5 306.5V309.4M250.5 303.3V308.0M268.5 312.6V315.4M274.5 315.8V319.7M276.5 314.8V318.9M277.5 313.9V318.5M278.5 313.4V316.8M281.5 310.7V315.1M282.5 311.6V312.7M285.5 313.3V315.1M298.5 317.4V322.2M307.5 319.7V322.0M310.5 322.9V326.9M319.5 325.9V329.5M323.5 325.2V328.4M331.5 322.5V326.7M333.5 314.3V320.6M334.5 313.6V316.3M335.5 311.1V315.5M340.5 313.4V314.5M341.5 311.3V315.0M344.5 306.7V310.6M346.5 307.6V309.9M362.5 320.7V326.1M364.5 316.7V319.9M366.5 314.9V316.6M369.5 316.9V318.0M370.5 316.9V318.0M376.5 322.1V323.2M378.5 323.8V324.9M379.5 323.5V326.6M389.5 331.9V334.3M395.5 334.4V337.1M399.5 335.6V337.6M400.5 335.6V338.1M405.5 334.2V337.3M409.5 331.0V335.3M414.5 356.7V361.7M419.5 356.1V359.8M421.5 353.5V354.6M423.5 350.1V353.6M430.5 355.2V356.3M431.5 353.1V356.5M432.5 353.1V355.1M433.5 351.9V355.0M442.5 355.2V358.3M446.5 359.8V362.4M450.5 360.5V363.6M452.5 357.3V360.1M453.5 357.9V360.6M454.5 357.5V361.3M456.5 358.9V362.6M457.5 356.4V363.5M458.5 357.0V358.1M459.5 349.7V355.3M463.5 351.4V353.1M465.5 353.5V354.6M467.5 355.2V356.3M471.5 356.7V360.1M472.5 356.5V358.7M479.5 350.2V353.5M484.5 354.9V358.0M485.5 353.1V357.4M486.5 351.4V355.6M533.5 344.1V349.6M535.5 339.5V345.3M593.5 346.9V351.4M618.5 342.7V345.8M621.5 337.6V342.5M622.5 337.3V341.0M630.5 337.6V341.1M631.5 336.0V338.8M646.5 340.5V344.0M660.5 353.6V358.2M661.5 351.2V356.3M676.5 345.9V356.3M686.5 336.0V342.4M687.5 331.6V337.0M690.5 332.3V335.8M691.5 328.6V336.6M693.5 320.9V327.2M702.5 343.1V348.4M705.5 335.5V339.7M707.5 330.8V331.9M711.5 325.4V331.9M715.5 318.3V320.5M716.5 314.2V318.0M722.5 317.9V325.0M723.5 313.6V320.0M724.5 313.4V316.6M735.5 344.8V345.9M746.5 370.2V372.4M747.5 373.9V375.6M752.5 376.0V379.0M754.5 369.1V373.7M756.5 357.0V358.1M757.5 348.1V358.4M758.5 346.3V350.0M764.5 348.1V353.1M768.5 342.7V347.7M769.5 334.3V344.2M777.5 340.8V343.7M784.5 341.3V342.4M785.5 339.1V344.2M786.5 337.1V341.0M788.5 334.0V337.0M792.5 342.3V346.2M802.5 348.1V351.4M818.5 334.3V337.1M819.5 334.3V335.4M832.5 332.2V335.6M835.5 325.5V328.8M836.5 325.1V326.9M837.5 329.1V330.2M854.5 313.3V315.4M855.5 311.0V314.7M856.5 309.6V313.4M875.5 282.8V287.1M892.5 283.8V289.0M918.5 280.3V283.2M929.5 278.3V281.4M934.5 279.6V282.1M953.5 278.1V281.9M954.5 277.8V279.8M120.5 291.0V299.0M522.5 350.5V361.3M533.5 338.8V351.5M583.5 352.5V359.3M659.5 356.5V363.2M671.5 356.4V367.4M684.5 332.0V344.7M756.5 350.0V372.0M758.5 337.0V352.0M769.5 334.0V345.7M865.5 294.8V305.5M866.5 284.9V293.5M968.5 276.2V281.6M8.5 229.8V231.0M19.5 230.6V232.1M23.5 226.0V227.0M26.5 215.8V220.7M34.5 224.3V225.5M84.5 221.0V234.3" stroke="#ff1010" stroke-width="1.1" fill="none"/>
<polyline points="6.5,486.2 9.4,488.8 12.5,493.8 16.2,494.8 18.1,491.2 20.6,495.0 23.1,495.6 25.0,497.5 26.5,498.1 27.8,501.5 30.6,499.4 33.1,500.0 35.0,500.6 36.9,499.8 38.8,503.1 41.2,506.9 42.5,505.0 44.0,499.4 46.5,502.5 48.1,505.0 49.0,509.4 50.0,503.8 53.1,503.8 56.2,506.9 60.0,505.0 63.1,501.9 65.6,499.4 66.9,500.0 68.8,497.5 70.6,496.0 71.9,501.2 73.8,500.0 75.6,496.9 78.1,500.0 81.2,501.9 83.1,502.5 86.2,506.9 87.5,506.2 88.5,501.5 100.0,501.5 101.9,498.1 103.5,495.6 104.4,506.2 106.0,505.0 108.8,495.0 110.0,496.2 111.2,503.1 113.1,492.5 114.8,493.8 115.6,491.2 116.2,477.5 118.1,468.8 119.8,465.0 120.0,465.0 121.2,467.5 123.1,461.2 125.6,457.8 127.5,458.8 128.5,460.6 130.6,456.2 132.5,455.4 134.4,458.8 136.2,461.9 137.5,458.5 140.0,457.2 142.2,455.6 144.4,457.8 146.0,461.9 147.8,459.4 149.4,454.0 151.2,455.6 153.8,455.2 156.2,453.5 158.8,453.5 160.6,454.4 162.2,451.9 163.8,456.9 165.6,458.5 167.2,459.0 169.4,456.2 171.0,455.0 172.5,460.0 174.4,466.2 175.6,465.0 176.9,469.4 178.1,465.6 180.0,464.8 181.5,459.0 183.1,463.8 185.0,464.4 188.1,468.1 190.0,466.2 191.5,465.2 193.8,469.4 196.2,468.8 198.1,469.8 200.0,465.6 202.5,468.8 206.2,473.5 209.4,473.5 211.2,471.2 212.5,466.9 214.4,464.8 216.2,467.2 218.8,466.9 221.9,465.0 223.5,461.2 225.2,461.9 227.8,456.5 230.0,456.9 231.9,455.2 233.1,456.5 234.4,455.0 235.6,458.8 236.9,463.1 238.8,460.0 240.0,458.8 241.2,455.0 243.8,454.8 245.6,451.9 247.2,453.8 248.5,456.9 250.0,454.4 251.9,455.2 253.8,452.5 256.9,451.9 260.0,449.4 261.9,450.6 263.8,448.5 266.2,447.8 268.1,447.5 270.0,445.0 271.9,444.0 274.0,442.2 275.6,444.4 277.5,445.0 279.4,447.8 281.2,449.4 283.1,449.0 284.8,451.2 286.9,448.8 288.8,446.5 290.2,447.8 291.9,444.0 295.0,441.5 296.9,443.8 299.4,445.0 301.9,447.2 304.4,445.6 307.5,447.2 309.4,446.2 311.2,444.0 314.4,444.0 316.9,441.9 319.4,441.0 321.9,440.2 323.8,441.9 325.2,443.1 326.9,441.2 329.0,443.1 331.2,444.0 333.1,444.8 333.8,450.6 335.6,451.9 337.5,455.6 339.4,454.4 341.2,454.8 343.1,456.9 345.0,457.5 348.1,457.2 350.0,454.8 351.5,456.0 353.8,453.8 356.2,453.1 359.4,452.5 360.0,452.5 361.9,449.4 363.8,448.1 365.6,451.2 367.5,452.2 370.0,450.0 371.9,447.5 373.1,446.5 375.0,442.8 376.9,445.0 378.8,444.0 380.2,445.6 382.5,443.5 385.6,444.0 388.1,441.9 390.0,439.0 391.9,435.6 395.0,435.2 396.9,436.5 398.1,431.9 400.6,435.0 403.8,435.2 405.6,432.2 407.5,434.0 410.0,433.1 411.9,431.2 413.5,428.8 414.0,436.2 415.6,441.2 417.5,439.8 419.8,443.1 423.1,443.1 425.6,439.4 427.5,436.5 429.4,440.6 431.9,440.2 433.8,442.8 435.0,438.5 438.1,438.8 440.0,435.6 442.5,435.0 444.4,431.9 446.2,432.5 448.1,431.5 449.4,436.5 451.2,434.4 453.1,439.4 455.2,437.8 456.5,436.5 458.1,442.5 460.0,444.4 461.5,444.0 462.2,447.5 463.5,441.2 465.0,437.8 466.2,442.8 467.8,436.2 470.6,434.0 472.5,430.0 474.0,430.0 475.6,436.9 478.1,440.6 479.4,432.5 480.0,432.5 482.8,434.8 485.0,430.6 486.2,428.1 488.1,431.2 490.0,430.6 491.5,426.2 493.5,424.8 495.0,419.8 496.5,424.8 499.4,424.0 501.9,420.0 503.5,422.5 505.6,419.8 507.5,418.8 509.4,419.0 510.0,425.6 511.9,429.4 514.4,430.6 516.2,426.9 517.5,424.8 519.8,426.2 521.9,423.8 522.8,428.8 525.0,426.9 527.5,426.0 531.2,426.2 532.5,430.0 533.8,438.1 535.6,441.5 537.5,443.1 538.8,445.6 540.0,443.8 543.8,443.8 545.6,441.9 547.5,440.0 549.4,442.8 550.6,442.8 552.5,445.6 553.8,446.2 555.2,449.8 556.5,442.8 557.8,441.2 560.6,441.2 562.5,439.0 564.0,441.0 566.2,440.0 569.0,441.5 571.2,445.6 573.1,441.5 575.0,443.8 576.2,443.1 578.8,440.0 581.2,438.5 583.1,440.0 585.0,438.5 586.9,442.8 588.5,444.0 591.2,440.6 593.8,439.4 595.6,441.9 597.5,443.5 600.0,440.6 603.1,441.2 604.8,438.5 606.2,443.1 607.8,440.0 609.4,447.2 611.2,445.2 613.8,445.0 615.6,442.2 617.2,441.2 618.8,444.0 620.6,444.8 622.5,447.5 625.0,448.1 626.9,444.4 629.8,443.8 631.2,440.0 632.8,436.2 634.4,441.9 636.0,446.0 637.5,440.6 639.8,438.8 641.0,443.8 642.5,441.9 644.0,443.8 645.6,446.2 647.2,440.6 649.4,439.0 650.6,441.9 652.2,435.6 655.0,434.8 656.9,439.4 659.4,436.2 661.9,435.2 664.0,435.6 665.0,432.5 666.9,439.4 668.5,435.6 669.8,431.9 671.9,434.4 672.8,436.9 674.8,433.1 676.2,432.5 677.2,440.0 679.0,440.6 680.6,446.9 682.5,451.9 684.0,455.0 685.2,456.9 686.9,449.4 689.0,453.1 691.2,449.8 693.1,457.5 695.0,460.0 697.5,459.4 698.8,460.6 700.0,453.1 701.5,447.5 703.1,445.0 704.8,453.1 706.2,455.0 707.8,460.6 709.8,458.1 711.0,463.1 712.5,459.4 713.5,465.6 715.6,460.6 718.1,465.6 720.0,463.8 722.2,463.1 724.4,466.9 726.5,474.8 728.1,466.2 730.0,463.8 731.5,463.1 732.8,456.9 734.4,454.4 735.6,455.6 737.5,447.5 739.4,445.6 740.6,439.8 742.5,445.0 744.4,442.5 746.2,445.6 748.1,439.4 750.0,438.8 751.2,436.2 753.1,443.8 755.0,449.4 756.0,458.1 757.5,448.8 759.4,453.8 762.5,453.1 764.0,448.8 765.6,453.1 767.5,456.9 769.4,461.2 771.0,468.8 772.5,470.6 774.0,471.9 775.2,466.9 777.5,468.1 780.6,470.6 783.8,469.4 786.2,467.2 788.8,470.6 791.0,466.2 793.1,466.9 794.8,465.6 795.6,469.4 796.9,466.2 798.8,467.5 800.6,470.2 803.1,469.0 805.6,466.2 806.9,469.8 809.4,467.5 810.6,473.8 812.5,469.4 815.0,470.6 816.9,471.2 818.8,477.5 820.2,478.5 823.1,476.0 825.0,480.6 826.5,482.5 828.8,477.5 830.6,470.0 832.2,476.2 833.8,481.9 836.2,483.8 838.1,477.5 839.4,478.1 840.0,478.2 841.2,484.5 843.5,482.0 845.2,480.5 847.2,481.4 848.5,486.0 850.6,485.5 852.5,487.2 854.8,486.8 856.2,488.9 858.8,488.0 860.6,491.4 863.1,491.0 865.6,491.4 866.9,497.0 868.1,502.0 870.6,506.4 872.2,503.2 875.0,503.2 876.9,506.0 879.8,509.2 882.5,508.9 885.0,506.0 886.9,503.2 888.8,498.2 890.6,501.4 893.1,501.8 895.0,503.9 896.9,499.5 897.8,498.0 899.4,501.8 901.2,502.6 903.1,501.8 905.0,505.1 906.9,502.6 908.8,505.5 910.6,504.5 912.5,507.0 914.8,508.0 916.9,504.5 919.4,501.8 921.0,503.9 922.2,506.8 923.5,502.2 925.6,504.5 928.1,505.1 930.0,508.2 932.5,512.0 935.0,513.0 936.9,510.1 938.8,506.8 940.6,506.0 943.1,505.5 945.0,510.8 947.5,516.0 949.4,516.4 951.2,517.6 953.1,515.5 956.9,513.2 960.0,515.1 962.5,512.6 965.0,512.0 966.5,515.1 969.5,520.5" fill="none" stroke="#ff0000" stroke-width="1.9" stroke-linejoin="round" stroke-linecap="round"/>
<path d="M5.5 37.7V186.5" stroke="#a4a4a4" stroke-width="1.1"/>
<path d="M5 186.0H972.0M971.5 37.7V186.5" stroke="#b4b4b4" stroke-width="1.6" fill="none"/>
<text class="t l" text-anchor="middle" transform="scale(0.88,1)" x="15.60 21.11" y="193.60">03</text>
<text class="t l" text-anchor="middle" transform="scale(0.88,1)" x="58.78 64.29" y="193.60">04</text>
<text class="t l" text-anchor="middle" transform="scale(0.88,1)" x="90.82 96.34" y="193.60">05</text>
<text class="t l" text-anchor="middle" transform="scale(0.88,1)" x="147.98 153.49" y="193.60">09</text>
<text class="t l" text-anchor="middle" transform="scale(0.88,1)" x="203.66 209.18" y="193.60">10</text>
<text class="t l" text-anchor="middle" transform="scale(0.88,1)" x="257.98 263.49" y="193.60">11</text>
<text class="t l" text-anchor="middle" transform="scale(0.88,1)" x="309.91 315.43" y="193.60">12</text>
<text class="t l" text-anchor="middle" transform="scale(0.88,1)" x="360.71 366.22" y="193.60">13</text>
<text class="t l" text-anchor="middle" transform="scale(0.88,1)" x="411.62 417.13" y="193.60">14</text>
<text class="t l" text-anchor="middle" transform="scale(0.88,1)" x="448.55 454.06" y="193.60">15</text>
<text class="t l" text-anchor="middle" transform="scale(0.88,1)" x="473.66 479.18" y="193.60">16</text>
<text class="t l" text-anchor="middle" transform="scale(0.88,1)" x="500.03 505.54" y="193.60">17</text>
<text class="t l" text-anchor="middle" transform="scale(0.88,1)" x="555.60 561.11" y="193.60">18</text>
<text class="t l" text-anchor="middle" transform="scale(0.88,1)" x="607.87 613.38" y="193.60">19</text>
<text class="t l" text-anchor="middle" transform="scale(0.88,1)" x="659.35 664.86" y="193.60">20</text>
<text class="t l" text-anchor="middle" transform="scale(0.88,1)" x="708.21 713.72" y="193.60">21</text>
<text class="t l" text-anchor="middle" transform="scale(0.88,1)" x="752.76 758.27" y="193.60">22</text>
<text class="t l" text-anchor="middle" transform="scale(0.88,1)" x="807.19 812.70" y="193.60">23</text>
<text class="t l" text-anchor="middle" transform="scale(0.88,1)" x="862.41 867.93" y="193.60">00</text>
<text class="t l" text-anchor="middle" transform="scale(0.88,1)" x="915.14 920.65" y="193.60">01</text>
<text class="t l" text-anchor="middle" transform="scale(0.88,1)" x="962.41 967.93" y="193.60">02</text>
<text class="t l" text-anchor="middle" transform="scale(0.88,1)" x="1007.30 1012.81" y="193.60">03</text>
<text class="t l" text-anchor="middle" transform="scale(0.88,1)" x="1052.76 1058.27" y="193.60">04</text>
<text class="t l" text-anchor="middle" transform="scale(0.88,1)" x="1079.35 1084.86" y="193.60">05</text>
<text class="t l" text-anchor="middle" transform="scale(0.88,1)" x="1090.82 1096.34" y="193.60">06</text>
<text class="t b6 l" text-anchor="middle" transform="scale(0.88,1)" x="119.80 125.31" y="193.60">06</text>
<text class="t l" text-anchor="middle" transform="scale(0.88,1)" x="134.57 140.09" y="181.80">20</text>
<text class="t l" text-anchor="middle" transform="scale(0.88,1)" x="863.21 868.72" y="181.80">21</text>
<text class="t l" text-anchor="middle" transform="scale(0.88,1)" x="1107.53 1113.04 1118.55 1124.06 1129.57" y="54.40">6,580</text>
<text class="t l" text-anchor="middle" transform="scale(0.88,1)" x="1107.53 1113.04 1118.55 1124.06 1129.57" y="77.50">6,570</text>
<text class="t l" text-anchor="middle" transform="scale(0.88,1)" x="1107.53 1113.04 1118.55 1124.06 1129.57" y="100.60">6,560</text>
<text class="t l" text-anchor="middle" transform="scale(0.88,1)" x="1107.53 1113.04 1118.55 1124.06 1129.57" y="123.70">6,550</text>
<text class="t l" text-anchor="middle" transform="scale(0.88,1)" x="1107.53 1113.04 1118.55 1124.06 1129.57" y="146.70">6,540</text>
<text class="t l" text-anchor="middle" transform="scale(0.88,1)" x="1107.53 1113.04 1118.55 1124.06 1129.57" y="192.90">6,520</text>
<rect x="971.8" y="154.7" width="46.5" height="16.9" fill="#d3d3d3"/>
<text class="bx l" text-anchor="middle" transform="scale(0.88,1)" x="1118.75 1124.43 1130.11 1135.80 1141.48" y="166.55">6,534</text>
<path d="M5.5 202.9V397.2" stroke="#a4a4a4" stroke-width="1.1"/>
<path d="M5 396.7H972.0M971.5 202.9V397.2" stroke="#b4b4b4" stroke-width="1.6" fill="none"/>
<text class="t l" text-anchor="middle" transform="scale(0.88,1)" x="15.60 21.11" y="404.30">03</text>
<text class="t l" text-anchor="middle" transform="scale(0.88,1)" x="58.78 64.29" y="404.30">04</text>
<text class="t l" text-anchor="middle" transform="scale(0.88,1)" x="90.82 96.34" y="404.30">05</text>
<text class="t l" text-anchor="middle" transform="scale(0.88,1)" x="147.98 153.49" y="404.30">09</text>
<text class="t l" text-anchor="middle" transform="scale(0.88,1)" x="203.66 209.18" y="404.30">10</text>
<text class="t l" text-anchor="middle" transform="scale(0.88,1)" x="257.98 263.49" y="404.30">11</text>
<text class="t l" text-anchor="middle" transform="scale(0.88,1)" x="309.91 315.43" y="404.30">12</text>
<text class="t l" text-anchor="middle" transform="scale(0.88,1)" x="360.71 366.22" y="404.30">13</text>
<text class="t l" text-anchor="middle" transform="scale(0.88,1)" x="411.62 417.13" y="404.30">14</text>
<text class="t l" text-anchor="middle" transform="scale(0.88,1)" x="448.55 454.06" y="404.30">15</text>
<text class="t l" text-anchor="middle" transform="scale(0.88,1)" x="473.66 479.18" y="404.30">16</text>
<text class="t l" text-anchor="middle" transform="scale(0.88,1)" x="500.03 505.54" y="404.30">17</text>
<text class="t l" text-anchor="middle" transform="scale(0.88,1)" x="555.60 561.11" y="404.30">18</text>
<text class="t l" text-anchor="middle" transform="scale(0.88,1)" x="607.87 613.38" y="404.30">19</text>
<text class="t l" text-anchor="middle" transform="scale(0.88,1)" x="659.35 664.86" y="404.30">20</text>
<text class="t l" text-anchor="middle" transform="scale(0.88,1)" x="708.21 713.72" y="404.30">21</text>
<text class="t l" text-anchor="middle" transform="scale(0.88,1)" x="752.76 758.27" y="404.30">22</text>
<text class="t l" text-anchor="middle" transform="scale(0.88,1)" x="807.19 812.70" y="404.30">23</text>
<text class="t l" text-anchor="middle" transform="scale(0.88,1)" x="862.41 867.93" y="404.30">00</text>
<text class="t l" text-anchor="middle" transform="scale(0.88,1)" x="915.14 920.65" y="404.30">01</text>
<text class="t l" text-anchor="middle" transform="scale(0.88,1)" x="962.41 967.93" y="404.30">02</text>
<text class="t l" text-anchor="middle" transform="scale(0.88,1)" x="1007.30 1012.81" y="404.30">03</text>
<text class="t l" text-anchor="middle" transform="scale(0.88,1)" x="1052.76 1058.27" y="404.30">04</text>
<text class="t l" text-anchor="middle" transform="scale(0.88,1)" x="1079.35 1084.86" y="404.30">05</text>
<text class="t l" text-anchor="middle" transform="scale(0.88,1)" x="1090.82 1096.34" y="404.30">06</text>
<text class="t b6 l" text-anchor="middle" transform="scale(0.88,1)" x="119.80 125.31" y="404.30">06</text>
<text class="t l" text-anchor="middle" transform="scale(0.88,1)" x="134.57 140.09" y="392.50">20</text>
<text class="t l" text-anchor="middle" transform="scale(0.88,1)" x="863.21 868.72" y="392.50">21</text>
<text class="t l" text-anchor="middle" transform="scale(0.88,1)" x="1107.53 1113.04 1118.55 1124.06 1129.57" y="218.20">3,450</text>
<text class="t l" text-anchor="middle" transform="scale(0.88,1)" x="1107.53 1113.04 1118.55 1124.06 1129.57" y="261.80">3,425</text>
<text class="t l" text-anchor="middle" transform="scale(0.88,1)" x="1107.53 1113.04 1118.55 1124.06 1129.57" y="305.30">3,400</text>
<text class="t l" text-anchor="middle" transform="scale(0.88,1)" x="1107.53 1113.04 1118.55 1124.06 1129.57" y="348.90">3,375</text>
<text class="t l" text-anchor="middle" transform="scale(0.88,1)" x="1107.53 1113.04 1118.55 1124.06 1129.57" y="392.50">3,350</text>
<rect x="971.8" y="270.6" width="46.5" height="16.0" fill="#d3d3d3"/>
<text class="bx l" text-anchor="middle" transform="scale(0.88,1)" x="1118.75 1124.43 1130.11 1135.80 1141.48" y="282.00">3,417</text>
<path d="M5.5 413.2V527.5" stroke="#a4a4a4" stroke-width="1.1"/>
<path d="M5 527.0H972.0M971.5 413.2V527.5" stroke="#b4b4b4" stroke-width="1.6" fill="none"/>
<text class="t l" text-anchor="middle" transform="scale(0.88,1)" x="15.60 21.11" y="534.60">03</text>
<text class="t l" text-anchor="middle" transform="scale(0.88,1)" x="58.78 64.29" y="534.60">04</text>
<text class="t l" text-anchor="middle" transform="scale(0.88,1)" x="90.82 96.34" y="534.60">05</text>
<text class="t l" text-anchor="middle" transform="scale(0.88,1)" x="147.98 153.49" y="534.60">09</text>
<text class="t l" text-anchor="middle" transform="scale(0.88,1)" x="203.66 209.18" y="534.60">10</text>
<text class="t l" text-anchor="middle" transform="scale(0.88,1)" x="257.98 263.49" y="534.60">11</text>
<text class="t l" text-anchor="middle" transform="scale(0.88,1)" x="309.91 315.43" y="534.60">12</text>
<text class="t l" text-anchor="middle" transform="scale(0.88,1)" x="360.71 366.22" y="534.60">13</text>
<text class="t l" text-anchor="middle" transform="scale(0.88,1)" x="411.62 417.13" y="534.60">14</text>
<text class="t l" text-anchor="middle" transform="scale(0.88,1)" x="448.55 454.06" y="534.60">15</text>
<text class="t l" text-anchor="middle" transform="scale(0.88,1)" x="473.66 479.18" y="534.60">16</text>
<text class="t l" text-anchor="middle" transform="scale(0.88,1)" x="500.03 505.54" y="534.60">17</text>
<text class="t l" text-anchor="middle" transform="scale(0.88,1)" x="555.60 561.11" y="534.60">18</text>
<text class="t l" text-anchor="middle" transform="scale(0.88,1)" x="607.87 613.38" y="534.60">19</text>
<text class="t l" text-anchor="middle" transform="scale(0.88,1)" x="659.35 664.86" y="534.60">20</text>
<text class="t l" text-anchor="middle" transform="scale(0.88,1)" x="708.21 713.72" y="534.60">21</text>
<text class="t l" text-anchor="middle" transform="scale(0.88,1)" x="752.76 758.27" y="534.60">22</text>
<text class="t l" text-anchor="middle" transform="scale(0.88,1)" x="807.19 812.70" y="534.60">23</text>
<text class="t l" text-anchor="middle" transform="scale(0.88,1)" x="862.41 867.93" y="534.60">00</text>
<text class="t l" text-anchor="middle" transform="scale(0.88,1)" x="915.14 920.65" y="534.60">01</text>
<text class="t l" text-anchor="middle" transform="scale(0.88,1)" x="962.41 967.93" y="534.60">02</text>
<text class="t l" text-anchor="middle" transform="scale(0.88,1)" x="1007.30 1012.81" y="534.60">03</text>
<text class="t l" text-anchor="middle" transform="scale(0.88,1)" x="1052.76 1058.27" y="534.60">04</text>
<text class="t l" text-anchor="middle" transform="scale(0.88,1)" x="1079.35 1084.86" y="534.60">05</text>
<text class="t l" text-anchor="middle" transform="scale(0.88,1)" x="1090.82 1096.34" y="534.60">06</text>
<text class="t b6 l" text-anchor="middle" transform="scale(0.88,1)" x="119.80 125.31" y="534.60">06</text>
<text class="t l" text-anchor="middle" transform="scale(0.88,1)" x="134.57 140.09" y="522.80">20</text>
<text class="t l" text-anchor="middle" transform="scale(0.88,1)" x="863.21 868.72" y="522.80">21</text>
<text class="t l" text-anchor="middle" transform="scale(0.88,1)" x="1107.53 1113.04 1118.55 1124.06 1129.57" y="443.10">3,175</text>
<text class="t l" text-anchor="middle" transform="scale(0.88,1)" x="1107.53 1113.04 1118.55 1124.06 1129.57" y="474.80">3,150</text>
<text class="t l" text-anchor="middle" transform="scale(0.88,1)" x="1107.53 1113.04 1118.55 1124.06 1129.57" y="506.40">3,125</text>
<text class="t l" text-anchor="middle" transform="scale(0.88,1)" x="1107.53 1113.04 1118.55 1124.06 1129.57" y="538.00">3,100</text>
<rect x="971.8" y="510.8" width="46.5" height="16.8" fill="#d3d3d3"/>
<text class="bx l" text-anchor="middle" transform="scale(0.88,1)" x="1118.75 1124.43 1130.11 1135.80 1141.48" y="522.60">3,117</text>
<text class="t k" text-anchor="middle" x="11.15 20.85" y="47.00">時刻</text>
<text class="t l" text-anchor="middle" transform="scale(0.88,1)" x="31.96 37.47 42.98 48.49 54.01 59.52" y="47.00">:06:00</text>
<text class="t k" text-anchor="middle" x="64.50 74.20" y="47.00">始値</text>
<text class="t l" text-anchor="middle" transform="scale(0.88,1)" x="92.59 98.10 103.61 109.12 114.63 120.14" y="47.00">:6,534</text>
<text class="t k" text-anchor="middle" x="117.85 127.55" y="47.00">高値</text>
<text class="t l" text-anchor="middle" transform="scale(0.88,1)" x="153.21 158.72 164.23 169.74 175.26 180.77" y="47.00">:6,534</text>
<text class="t k" text-anchor="middle" x="171.20 180.90" y="47.00">安値</text>
<text class="t l" text-anchor="middle" transform="scale(0.88,1)" x="213.84 219.35 224.86 230.37 235.88 241.39" y="47.00">:6,534</text>
<text class="t k" text-anchor="middle" x="224.55 234.25" y="47.00">終値</text>
<text class="t l" text-anchor="middle" transform="scale(0.88,1)" x="274.46 279.97 285.48 290.99 296.51 302.02" y="47.00">:6,534</text>
<text class="t k" text-anchor="middle" x="10.85 20.55" y="212.30">時刻</text>
<text class="t l" text-anchor="middle" transform="scale(0.88,1)" x="31.62 37.13 42.64 48.15 53.66 59.18" y="212.30">:06:00</text>
<text class="t k" text-anchor="middle" x="64.20 73.90" y="212.30">始値</text>
<text class="t l" text-anchor="middle" transform="scale(0.88,1)" x="92.24 97.76 103.27 108.78" y="212.30">:---</text>
<text class="t k" text-anchor="middle" x="107.85 117.55" y="212.30">高値</text>
<text class="t l" text-anchor="middle" transform="scale(0.88,1)" x="141.85 147.36 152.87 158.38" y="212.30">:---</text>
<text class="t k" text-anchor="middle" x="151.50 161.20" y="212.30">安値</text>
<text class="t l" text-anchor="middle" transform="scale(0.88,1)" x="191.45 196.96 202.47 207.98" y="212.30">:---</text>
<text class="t k" text-anchor="middle" x="195.15 204.85" y="212.30">終値</text>
<text class="t l" text-anchor="middle" transform="scale(0.88,1)" x="241.05 246.56 252.07 257.59" y="212.30">:---</text>
<text class="t l" text-anchor="middle" transform="scale(0.88,1)" x="9.06" y="422.80">[</text>
<text class="t k" text-anchor="middle" x="15.25" y="422.80">金</text>
<text class="t l" text-anchor="middle" transform="scale(0.88,1)" x="31.11 36.62 42.13 47.64 53.15" y="422.80">22/10</text>
<text class="t l" text-anchor="middle" transform="scale(0.88,1)" x="64.18 69.69 75.20 80.71 86.22" y="422.80">6,534</text>
<text class="t kx" text-anchor="middle" x="83.15" y="424.10">×</text>
<text class="t l" text-anchor="middle" transform="scale(0.88,1)" x="102.76 108.27 113.78 119.29 124.80" y="422.80">1.00]</text>
<text class="t l" text-anchor="middle" x="117.10" y="422.80">-</text>
<text class="t l" text-anchor="middle" transform="scale(0.88,1)" x="141.34" y="422.80">[</text>
<text class="t k" text-anchor="middle" x="131.65 141.35" y="422.80">白金</text>
<text class="t l" text-anchor="middle" transform="scale(0.88,1)" x="174.40 179.91 185.43 190.94 196.45" y="422.80">22/10</text>
<text class="t l" text-anchor="middle" transform="scale(0.88,1)" x="207.47 212.98 218.49 224.01 229.52" y="422.80">3,417</text>
<text class="t kx" text-anchor="middle" x="209.25" y="424.10">×</text>
<text class="t l" text-anchor="middle" transform="scale(0.88,1)" x="246.05 251.56 257.07 262.59 268.10" y="422.80">1.00]</text>
<text class="t k" text-anchor="middle" x="248.05 257.75" y="422.80">終値</text>
<text class="t k" text-anchor="middle" x="272.30 282.00" y="422.80">時刻</text>
<text class="t l" text-anchor="middle" transform="scale(0.88,1)" x="328.72 334.23 339.74 345.26 350.77 356.28" y="422.80">:06:00</text>
<text class="t l" text-anchor="middle" transform="scale(0.88,1)" x="367.30 372.81 378.32 383.84 389.35" y="422.80">3,117</text>
<g><rect x="8" y="4.2" width="11" height="11.4" fill="#f8f8f8"/><path d="M8.3 4.6V15.4H18.8" stroke="#8a8a8a" stroke-width=".9" fill="none"/><path d="M10.6 9.6V14" stroke="#e8202c" stroke-width="1.5"/><path d="M12.3 6.5V13.2" stroke="#1f7ae0" stroke-width="1.4"/><path d="M14.2 5.4V10.8" stroke="#e8202c" stroke-width="1.6"/><path d="M15.8 7.4V12" stroke="#1f7ae0" stroke-width="1.3"/><path d="M17.4 6.4V12.6" stroke="#f02030" stroke-width="1.5"/></g>
<text class="ui" x="23.6" y="14.3" font-size="11.6" fill="#000" textLength="196.5" lengthAdjust="spacingAndGlyphs">金1分足[2022/10]1.00 - 白金1分足[2022/10]1.00</text>
<rect x="956.6" y="5.2" width="8.2" height="10" fill="#ededed" stroke="#b4b4b4" stroke-width=".9"/><rect x="959.6" y="7.6" width="7.4" height="5.6" rx="1" fill="#dcdcdc" stroke="#6c6c6c" stroke-width="1.2"/>
<defs><linearGradient id="bg" x1="0" y1="0" x2="0" y2="1"><stop offset="0" stop-color="#f7f7f7"/><stop offset=".5" stop-color="#e9e9e9"/><stop offset="1" stop-color="#d4d4d4"/></linearGradient></defs>
<rect x="974.3" y="3.4" width="13.0" height="13.4" rx="2" fill="url(#bg)" stroke="#b2b2b2" stroke-width=".9"/>
<rect x="990.1" y="3.4" width="13.0" height="13.4" rx="2" fill="url(#bg)" stroke="#b2b2b2" stroke-width=".9"/>
<rect x="1005.9" y="3.4" width="12.5" height="13.4" rx="2" fill="url(#bg)" stroke="#b2b2b2" stroke-width=".9"/>
<path d="M978 12.7H982.6" stroke="#585858" stroke-width="1.5"/>
<rect x="993.9" y="8.1" width="5.6" height="4.8" fill="none" stroke="#5c5c5c" stroke-width="1.1"/><path d="M993.4 7.8H1000" stroke="#5c5c5c" stroke-width="1.5"/>
<path d="M1009.2 7.4L1015.2 13.5M1015.2 7.4L1009.2 13.5" stroke="#5a5a5a" stroke-width="1.3"/>
<text class="ui" x="8.9" y="32.4" font-size="10.4" fill="#2c3038" stroke="#2c3038" stroke-width="0.25" textLength="9.2" lengthAdjust="spacingAndGlyphs">金</text>
<text class="ui" x="26.9" y="32.0" font-size="10.3" fill="#2c3038" textLength="32.0" lengthAdjust="spacingAndGlyphs">2022/10</text>
<rect x="64.2" y="21.5" width="26.1" height="13.2" fill="#fff"/>
<rect x="90.3" y="21.5" width="11.2" height="13.2" fill="#ebebed" stroke="#a4a6ae" stroke-width=".8"/>
<path d="M90.3 28.1H101.5" stroke="#a4a6ae" stroke-width=".9"/>
<path d="M93.6 26.6L95.9 23.7L98.2 26.6ZM93.6 29.7L95.9 32.6L98.2 29.7Z" fill="#111"/>
<text class="ui" x="66.6" y="30.2" font-size="10.1" fill="#111" textLength="13.8" lengthAdjust="spacingAndGlyphs">1.00</text>
<path d="M106.6 23.4V34" stroke="#f3f5f9" stroke-width="1.1"/><path d="M105.7 23.4V34" stroke="#c3c7d2" stroke-width=".7"/>
<text class="ui" x="112.6" y="32.4" font-size="10.4" fill="#2c3038" stroke="#2c3038" stroke-width="0.25" textLength="17.8" lengthAdjust="spacingAndGlyphs">白金</text>
<text class="ui" x="139.3" y="32.0" font-size="10.3" fill="#2c3038" textLength="32.2" lengthAdjust="spacingAndGlyphs">2022/10</text>
<rect x="176.4" y="21.5" width="26.1" height="13.2" fill="#fff"/>
<rect x="202.5" y="21.5" width="11.2" height="13.2" fill="#ebebed" stroke="#a4a6ae" stroke-width=".8"/>
<path d="M202.5 28.1H213.7" stroke="#a4a6ae" stroke-width=".9"/>
<path d="M205.8 26.6L208.1 23.7L210.4 26.6ZM205.8 29.7L208.1 32.6L210.4 29.7Z" fill="#111"/>
<text class="ui" x="178.9" y="30.2" font-size="10.1" fill="#111" textLength="14.2" lengthAdjust="spacingAndGlyphs">1.00</text>
<path d="M217.8 23.4V34" stroke="#f3f5f9" stroke-width="1.1"/><path d="M216.9 23.4V34" stroke="#c3c7d2" stroke-width=".7"/>
<text class="ui" x="224.4" y="32.4" font-size="10.4" fill="#2c3038" stroke="#2c3038" stroke-width="0.25" textLength="17.8" lengthAdjust="spacingAndGlyphs">分足</text>
<path d="M247.3 27L251.9 27L249.6 29.4Z" fill="#111"/>
<rect x="255.0" y="21.5" width="24.4" height="13.2" fill="#fff"/>
<rect x="279.4" y="21.5" width="11.2" height="13.2" fill="#ebebed" stroke="#a4a6ae" stroke-width=".8"/>
<path d="M279.4 28.1H290.6" stroke="#a4a6ae" stroke-width=".9"/>
<path d="M282.7 26.6L285.0 23.7L287.3 26.6ZM282.7 29.7L285.0 32.6L287.3 29.7Z" fill="#111"/>
<text class="ui" x="257.2" y="30.2" font-size="10.1" fill="#111" textLength="17.8" lengthAdjust="spacingAndGlyphs">1200</text>
<text class="ui" x="296.2" y="32.4" font-size="10.4" fill="#2c3038" stroke="#2c3038" stroke-width="0.25" textLength="21.8" lengthAdjust="spacingAndGlyphs">1分足</text>
<path d="M323.3 27L327.9 27L325.6 29.4Z" fill="#111"/>
<path d="M334.6 23.4V34" stroke="#f3f5f9" stroke-width="1.1"/><path d="M333.7 23.4V34" stroke="#c3c7d2" stroke-width=".7"/>
<rect x="336.4" y="21.2" width="13" height="12.6" fill="#d3d4d9"/><path d="M336.4 33.8V21.2H349.4" stroke="#7a7c84" stroke-width="1" fill="none"/><path d="M336.4 33.9H349.5V21.2" stroke="#f4f5f8" stroke-width=".8" fill="none"/>
<path d="M340.5 22V33M337.4 25.6H348.8" stroke="#5a62cc" stroke-width=".9"/>
<path d="M342.6 27.4L347 27.6L345.6 28.9L347.7 31L346.4 32.2L344.3 30.1L342.9 31.5Z" fill="#9420b0"/>
<path d="M357.0 23.4V34" stroke="#f3f5f9" stroke-width="1.1"/><path d="M356.1 23.4V34" stroke="#c3c7d2" stroke-width=".7"/>
<rect x="359.6" y="21.2" width="12.6" height="12.8" fill="#a9acb3"/><path d="M359.6 34V21.2H372.2" stroke="#7a7d86" stroke-width="1" fill="none"/><path d="M359.8 34H372.2V21.4" stroke="#eef0f4" stroke-width=".8" fill="none"/>
<path d="M361.6 22.8L369.8 25.9L367 27.3L370.6 31L369 32.6L365.4 28.9L363.9 31.8Z" fill="#7458d2" stroke="#f4f2ff" stroke-width=".9" stroke-linejoin="round"/>
<path d="M381 33C379.8 31.2 378.3 29.6 378.3 28.4C378.8 27.3 380.1 27.9 380.9 29L380.7 24.4C380.9 23.3 382.2 23.4 382.3 24.4L382.5 22.8C382.9 21.9 384.1 22.1 384.2 23.1L384.5 22.6C385.1 22 386.1 22.4 386.1 23.4L386.4 23.8C387.4 23.5 388 24.2 388 25.2C388.5 28 388.3 30.8 386.8 33Z" fill="#fffaf2" stroke="#e49a3a" stroke-width="1.1" stroke-linejoin="round"/><path d="M382.3 24.4V27.4M384.2 23.4V27.2M386.1 24V27.4" stroke="#e9aa55" stroke-width=".8"/>
<path d="M396.6 33.2L397.8 29.6L404.6 22.6C405.6 21.8 407.2 23.2 406.4 24.4L399.8 31.6Z" fill="#f6c070" stroke="#e0983a" stroke-width=".9" stroke-linejoin="round"/><path d="M396.6 33.2L397.2 31.4L398.4 32.6Z" fill="#8a5a20"/>
<path d="M414.4 33L415.6 29.4L422.6 22.4C423.8 21.6 425.6 23.2 424.6 24.6L417.8 31.6Z" fill="#bcd4fb" stroke="#3f78e0" stroke-width="1" stroke-linejoin="round"/><path d="M414.4 33L415.2 30.8L416.6 32.2Z" fill="#2a55b0"/><path d="M422 28.6L424.8 31.2L422 33.6L419.4 31.2Z" fill="#23448f"/>
<path d="M434.0 23.4V34" stroke="#f3f5f9" stroke-width="1.1"/><path d="M433.1 23.4V34" stroke="#c3c7d2" stroke-width=".7"/>
<rect x="438.4" y="22" width="10" height="11.6" fill="#e9eaee"/><path d="M438.6 22V33.4H448.6" stroke="#8e9096" stroke-width=".8" fill="none"/><path d="M440.6 27.8V33M442.8 24V33M445 26V33M447 29V33" stroke="#2f8cf5" stroke-width="1.5"/>
<path d="M450.9 27L455.5 27L453.2 29.4Z" fill="#111"/>
<rect x="460.4" y="22" width="10.4" height="11.6" fill="#e4e5ea"/><path d="M460.6 22V33.4H470.8" stroke="#8e9096" stroke-width=".8" fill="none"/><path d="M462.6 27.8V33M464.8 23.4V33M467 26V33M469 29V33" stroke="#2f8cf5" stroke-width="1.5"/><path d="M461.6 24.4L469.8 31.6M469.8 24.4L461.6 31.6" stroke="#ee2a3a" stroke-width="1.2"/>
<path d="M479.6 23.4V34" stroke="#f3f5f9" stroke-width="1.1"/><path d="M478.7 23.4V34" stroke="#c3c7d2" stroke-width=".7"/>
<path d="M486.2 24.1A4.4 4.4 0 1 0 491.7 30.9" fill="none" stroke="#2e97f2" stroke-width="2"/><path d="M483.3 22L488.5 22L488 26.9Z" fill="#2458f2"/><text class="ui" x="488.7" y="30.1" font-size="6.8" font-weight="bold" fill="#2a74dc" stroke="#2a74dc" stroke-width=".3">R</text>
<path d="M1001.5 32.4L1006.2 28.2" stroke="#5a50f0" stroke-width="2.4" stroke-linecap="round"/><path d="M1006.2 28.4C1004.6 26.4 1005.4 23 1008.4 22.3L1008.1 25.2L1010.2 26.6L1012.4 24.9C1012.8 28 1009.8 30.2 1006.2 28.4Z" fill="#a9a2f6" stroke="#7a70f2" stroke-width=".8" stroke-linejoin="round"/><path d="M1006.8 26.8L1007.4 24.4" stroke="#ece8ff" stroke-width=".9" stroke-linecap="round"/>
</svg></body></html>
